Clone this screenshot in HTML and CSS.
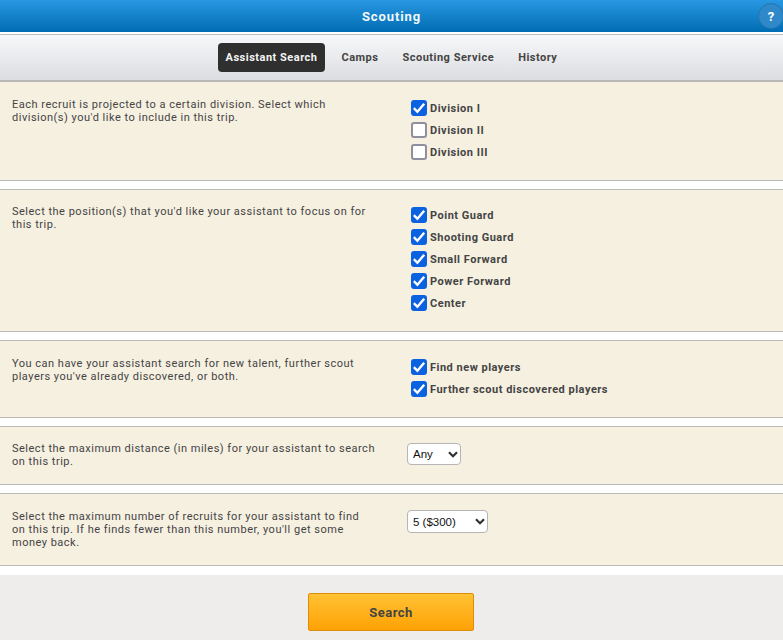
FILE: index.html
```html
<!DOCTYPE html>
<html lang="en">
<head>
<meta charset="utf-8">
<title>Scouting</title>
<link rel="stylesheet" href="styles.css">
</head>
<body>
<header class="title-bar">
  <h1 class="title">Scouting</h1>
  <button class="help" type="button">?</button>
</header>
<nav class="tabs">
  <a class="tab active">Assistant Search</a>
  <a class="tab">Camps</a>
  <a class="tab">Scouting Service</a>
  <a class="tab">History</a>
</nav>
<main>
  <section class="panel panel-first p1">
    <p class="desc">Each recruit is projected to a certain division. Select which division(s) you'd like to include in this trip.</p>
    <div class="options">
      <label class="opt"><input type="checkbox" checked>Division I</label>
      <label class="opt"><input type="checkbox">Division II</label>
      <label class="opt"><input type="checkbox">Division III</label>
    </div>
  </section>
  <section class="panel p2">
    <p class="desc">Select the position(s) that you'd like your assistant to focus on for this trip.</p>
    <div class="options">
      <label class="opt"><input type="checkbox" checked>Point Guard</label>
      <label class="opt"><input type="checkbox" checked>Shooting Guard</label>
      <label class="opt"><input type="checkbox" checked>Small Forward</label>
      <label class="opt"><input type="checkbox" checked>Power Forward</label>
      <label class="opt"><input type="checkbox" checked>Center</label>
    </div>
  </section>
  <section class="panel p3">
    <p class="desc">You can have your assistant search for new talent, further scout players you've already discovered, or both.</p>
    <div class="options">
      <label class="opt"><input type="checkbox" checked>Find new players</label>
      <label class="opt"><input type="checkbox" checked>Further scout discovered players</label>
    </div>
  </section>
  <section class="panel p4">
    <p class="desc">Select the maximum distance (in miles) for your assistant to search on this trip.</p>
    <div class="control">
      <select class="sel sel-any"><option>Any</option></select>
    </div>
  </section>
  <section class="panel p5">
    <p class="desc">Select the maximum number of recruits for your assistant to find on this trip. If he finds fewer than this number, you'll get some money back.</p>
    <div class="control">
      <select class="sel sel-num"><option>5 ($300)</option></select>
    </div>
  </section>
</main>
<footer class="actions">
  <button class="search" type="button">Search</button>
</footer>
</body>
</html>
```
FILE: styles.css
```css
* { box-sizing: border-box; }
html, body { margin: 0; padding: 0; height: 640px; overflow: hidden; background: #fff; }
body { font-family: Roboto, "Liberation Sans", sans-serif; color: #444; }

.title-bar {
  position: relative;
  height: 32px;
  background: linear-gradient(#2998e2, #006cb3);
  display: flex;
  align-items: center;
  justify-content: center;
}
.title { margin: 0; font-size: 13px; font-weight: 700; color: #f2f7fb; letter-spacing: .9px; }
.help {
  position: absolute;
  top: 3px;
  right: -1px;
  width: 26px;
  height: 26px;
  padding: 0;
  border-radius: 50%;
  border: 1px solid #1f78b4;
  background: #2f88c8;
  color: #fff;
  font: 700 13px Roboto, sans-serif;
}
.tabs {
  margin-top: 2px;
  height: 48px;
  border-top: 1px solid #bdbdbd;
  border-bottom: 2px solid #bab8b6;
  background: linear-gradient(#f7f8fa, #dcdde0);
  display: flex;
  align-items: center;
  justify-content: center;
  gap: 8px;
  padding-bottom: 1px;
}
.tab {
  height: 29px;
  line-height: 29px;
  padding: 0 8px;
  border-radius: 4px;
  font-size: 11px;
  font-weight: 700;
  letter-spacing: .5px;
  color: #444;
}
.tab.active { background: #2f2f2f; color: #f4f4f4; }

.panel {
  display: flex;
  background: #f6f0e1;
  border-top: 1px solid #bdbbb7;
  border-bottom: 1px solid #bdbbb7;
  margin-bottom: 8px;
}
.panel-first { border-top: 0; }
.p1 { height: 99px; padding-top: 16px; }
.p2 { height: 143px; padding-top: 15px; }
.p3 { height: 78px; padding-top: 16px; }
.p4 { height: 59px; padding-top: 15px; }
.p5 { height: 73px; padding-top: 16px; margin-bottom: 9px; }

.desc {
  width: 367px;
  margin: 0 0 0 12px;
  font-size: 11px;
  line-height: 13px;
  letter-spacing: .5px;
  color: #444;
}
.p5 .desc { padding-right: 10px; }
.options { margin-left: 32px; margin-top: 1px; display: flex; flex-direction: column; gap: 4px; }
.opt {
  display: flex;
  align-items: center;
  height: 18px;
  font-size: 11px;
  font-weight: 700;
  letter-spacing: .5px;
  color: #444;
}
.opt input {
  appearance: none;
  flex: none;
  width: 16px;
  height: 16px;
  margin: 0 3px 0 0;
  background: #fff;
  border: 2px solid #8f8f9d;
  border-radius: 3px;
}
.opt input:checked {
  background: #0b62e0 url("data:image/svg+xml,%3Csvg xmlns='http://www.w3.org/2000/svg' width='14' height='14'%3E%3Cpath d='M1.8 7.2l3.6 3.6 6.8-8' fill='none' stroke='%23fff' stroke-width='2.4'/%3E%3C/svg%3E") center no-repeat;
  border-color: #0b62e0;
}
.control { margin-left: 28px; }
.p4 .control { margin-top: 1px; }
.sel {
  appearance: none;
  display: block;
  height: 23px;
  padding: 0 0 0 5px;
  font-family: "Liberation Sans", Arial, sans-serif;
  font-size: 11.5px;
  color: #111;
  background-color: #fff;
  background-image: url("data:image/svg+xml,%3Csvg xmlns='http://www.w3.org/2000/svg' width='10' height='7'%3E%3Cpath d='M1 1.2l4 4 4-4' fill='none' stroke='%23333' stroke-width='2.2'/%3E%3C/svg%3E");
  background-repeat: no-repeat;
  background-position: right 2px center;
  border: 1px solid #b5b5b5;
  border-radius: 4px;
}
.sel-any { width: 54px; height: 22px; }
.sel-num { width: 81px; }

.actions {
  height: 65px;
  background: #eeedeb;
  display: flex;
  justify-content: center;
  align-items: flex-start;
  padding-top: 18px;
}
.search {
  width: 166px;
  height: 38px;
  margin-right: 1px;
  border: 1px solid #dd8e08;
  border-radius: 2px;
  background: linear-gradient(#ffc234, #ffa205);
  color: #444;
  font: 700 13px Roboto, sans-serif;
  letter-spacing: .5px;
}
```
